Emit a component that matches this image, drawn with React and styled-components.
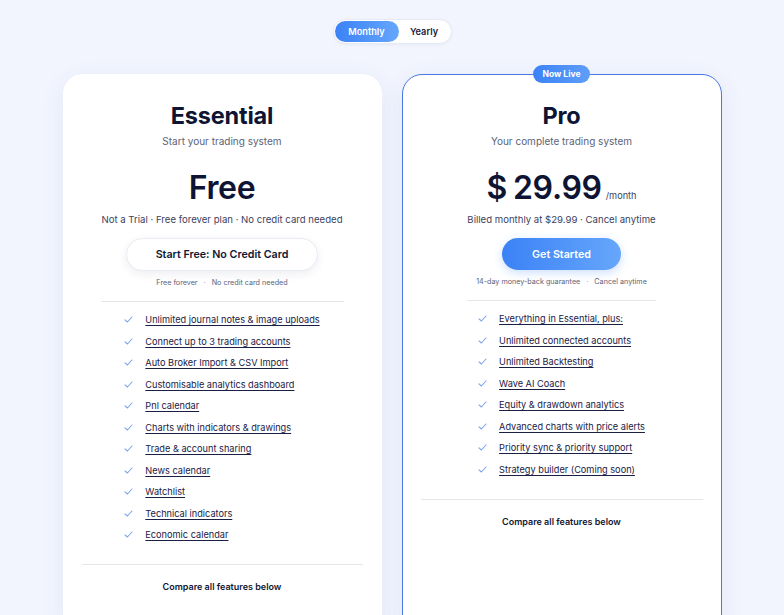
import React from 'react';
import styled, { createGlobalStyle } from 'styled-components';

const GlobalStyle = createGlobalStyle`
  html, body {
    margin: 0;
    padding: 0;
    background: #f2f5fe;
    font-family: 'Inter', 'Noto Sans', sans-serif;
    color: #111633;
    overflow: hidden;
  }
`;

const Page = styled.div`
  display: flex;
  flex-direction: column;
  align-items: center;
  padding-top: 19px;
  min-height: 615px;
`;

const Toggle = styled.div`
  display: flex;
  align-items: center;
  width: 119px;
  height: 25px;
  box-sizing: border-box;
  padding: 1px;
  background: #fff;
  border: 1px solid #e6eaf6;
  border-radius: 999px;
  box-shadow: 0 1px 3px rgba(40, 60, 120, 0.06);
`;

const ToggleOption = styled.div`
  flex: ${p => (p.$active ? '0 0 64px' : '1')};
  height: 100%;
  display: flex;
  align-items: center;
  justify-content: center;
  border-radius: 999px;
  font-size: 9.2px;
  font-weight: 600;
  color: ${p => (p.$active ? '#fff' : '#1b2040')};
  background: ${p => (p.$active ? 'linear-gradient(90deg, #3b82f6 0%, #66a6fb 100%)' : 'transparent')};
`;

const Plans = styled.div`
  display: grid;
  grid-template-columns: 319px 320px;
  gap: 20px;
  margin-top: 30px;
`;

const Card = styled.div`
  position: relative;
  display: flex;
  flex-direction: column;
  align-items: center;
  background: #fff;
  border-radius: 20px;
  padding: 25px 18px 40px;
  border: 1px solid ${p => (p.$featured ? '#4677e6' : 'transparent')};
  box-shadow: 0 6px 24px rgba(60, 80, 160, 0.08);
`;

const Badge = styled.div`
  position: absolute;
  top: -10px;
  left: 50%;
  transform: translateX(-50%);
  height: 18px;
  padding: 0 10px;
  display: flex;
  align-items: center;
  border-radius: 999px;
  background: linear-gradient(90deg, #3b82f6 0%, #5f9ef9 100%);
  color: #fff;
  font-size: 8.5px;
  font-weight: 700;
  white-space: nowrap;
`;

const Title = styled.h2`
  margin: 0;
  font-size: 23.5px;
  line-height: 32px;
  font-weight: 700;
  color: #0e1433;
  letter-spacing: -0.2px;
`;

const Subtitle = styled.div`
  margin-top: 1px;
  font-size: 10px;
  line-height: 16px;
  color: #5d6378;
`;

const Price = styled.div`
  margin-top: 20px;
  display: flex;
  align-items: baseline;
  height: 38px;
  font-size: 32px;
  line-height: 38px;
  font-weight: 600;
  color: #0e1433;
  letter-spacing: -0.3px;
`;

const Currency = styled.span`
  margin-right: 6px;
`;

const Period = styled.span`
  margin-left: 4px;
  font-size: 9.2px;
  line-height: 1;
  font-weight: 400;
  color: #3c4260;
  letter-spacing: 0;
`;

const PriceNote = styled.div`
  margin-top: ${p => (p.$tight ? '5px' : '5px')};
  font-size: 9.6px;
  line-height: 16px;
  color: #3c4260;
`;

const Button = styled.button`
  margin-top: 10px;
  height: ${p => (p.$primary ? '32px' : '33px')};
  width: ${p => (p.$primary ? '119px' : '192px')};
  border-radius: 999px;
  font-family: inherit;
  font-size: 10.7px;
  font-weight: 600;
  cursor: pointer;
  border: ${p => (p.$primary ? 'none' : '1px solid #e8ebf3')};
  color: ${p => (p.$primary ? '#fff' : '#111633')};
  background: ${p => (p.$primary ? 'linear-gradient(90deg, #3b82f6 0%, #66a6fb 100%)' : '#fff')};
  box-shadow: ${p =>
    p.$primary ? '0 3px 10px rgba(59, 130, 246, 0.25)' : '0 3px 10px rgba(30, 40, 90, 0.08)'};
`;

const SmallPrint = styled.div`
  margin-top: 6px;
  font-size: 7.2px;
  line-height: 12px;
  color: #5d6378;
`;

const Sep = styled.span`
  margin: 0 6px;
  color: #9aa0b4;
`;

const Divider = styled.hr`
  align-self: ${p => (p.$full ? 'stretch' : 'center')};
  width: ${p => (p.$full ? 'auto' : `${p.$width}px`)};
  margin: ${p => p.$space};
  border: none;
  border-top: 1px solid #e4e6ec;
`;

const FeatureList = styled.ul`
  list-style: none;
  margin: 0;
  padding: 0;
`;

const Feature = styled.li`
  display: flex;
  align-items: center;
  gap: 12px;
  height: 21.5px;
  font-size: 9.2px;
  color: #1a2044;

  a {
    color: inherit;
    text-decoration: underline;
    text-underline-offset: 2px;
    text-decoration-thickness: 1px;
  }
`;

const Compare = styled.div`
  font-size: 9px;
  line-height: 14px;
  font-weight: 600;
  color: #111633;
`;

const Check = () => (
  <svg width="9" height="7" viewBox="0 0 9 7" fill="none">
    <polyline points="1,3.8 3.4,6 8,1" stroke="#7aa3ee" strokeWidth="1.1" strokeLinecap="round" strokeLinejoin="round" />
  </svg>
);

const essentialFeatures = [
  'Unlimited journal notes & image uploads',
  'Connect up to 3 trading accounts',
  'Auto Broker Import & CSV Import',
  'Customisable analytics dashboard',
  'Pnl calendar',
  'Charts with indicators & drawings',
  'Trade & account sharing',
  'News calendar',
  'Watchlist',
  'Technical indicators',
  'Economic calendar',
];

const proFeatures = [
  'Everything in Essential, plus:',
  'Unlimited connected accounts',
  'Unlimited Backtesting',
  'Wave AI Coach',
  'Equity & drawdown analytics',
  'Advanced charts with price alerts',
  'Priority sync & priority support',
  'Strategy builder (Coming soon)',
];

const Features = ({ items }) => (
  <FeatureList>
    {items.map(item => (
      <Feature key={item}>
        <Check />
        <a href="#">{item}</a>
      </Feature>
    ))}
  </FeatureList>
);

export default function App() {
  return (
    <>
      <GlobalStyle />
      <Page>
        <Toggle>
          <ToggleOption $active>Monthly</ToggleOption>
          <ToggleOption>Yearly</ToggleOption>
        </Toggle>

        <Plans>
          <Card>
            <Title>Essential</Title>
            <Subtitle>Start your trading system</Subtitle>
            <Price>Free</Price>
            <PriceNote>Not a Trial · Free forever plan · No credit card needed</PriceNote>
            <Button>Start Free: No Credit Card</Button>
            <SmallPrint>
              Free forever<Sep>·</Sep>No credit card needed
            </SmallPrint>
            <Divider $width={243} $space="12px 0 7px" />
            <Features items={essentialFeatures} />
            <Divider $full $space="18px 0 15px" />
            <Compare>Compare all features below</Compare>
          </Card>

          <Card $featured>
            <Badge>Now Live</Badge>
            <Title>Pro</Title>
            <Subtitle>Your complete trading system</Subtitle>
            <Price>
              <Currency>$</Currency>29.99<Period>/month</Period>
            </Price>
            <PriceNote>Billed monthly at $29.99 · Cancel anytime</PriceNote>
            <Button $primary>Get Started</Button>
            <SmallPrint>
              14-day money-back guarantee<Sep>·</Sep>Cancel anytime
            </SmallPrint>
            <Divider $width={189} $space="12px 0 7px" />
            <Features items={proFeatures} />
            <Divider $full $space="19px 0 15px" />
            <Compare>Compare all features below</Compare>
          </Card>
        </Plans>
      </Page>
    </>
  );
}
